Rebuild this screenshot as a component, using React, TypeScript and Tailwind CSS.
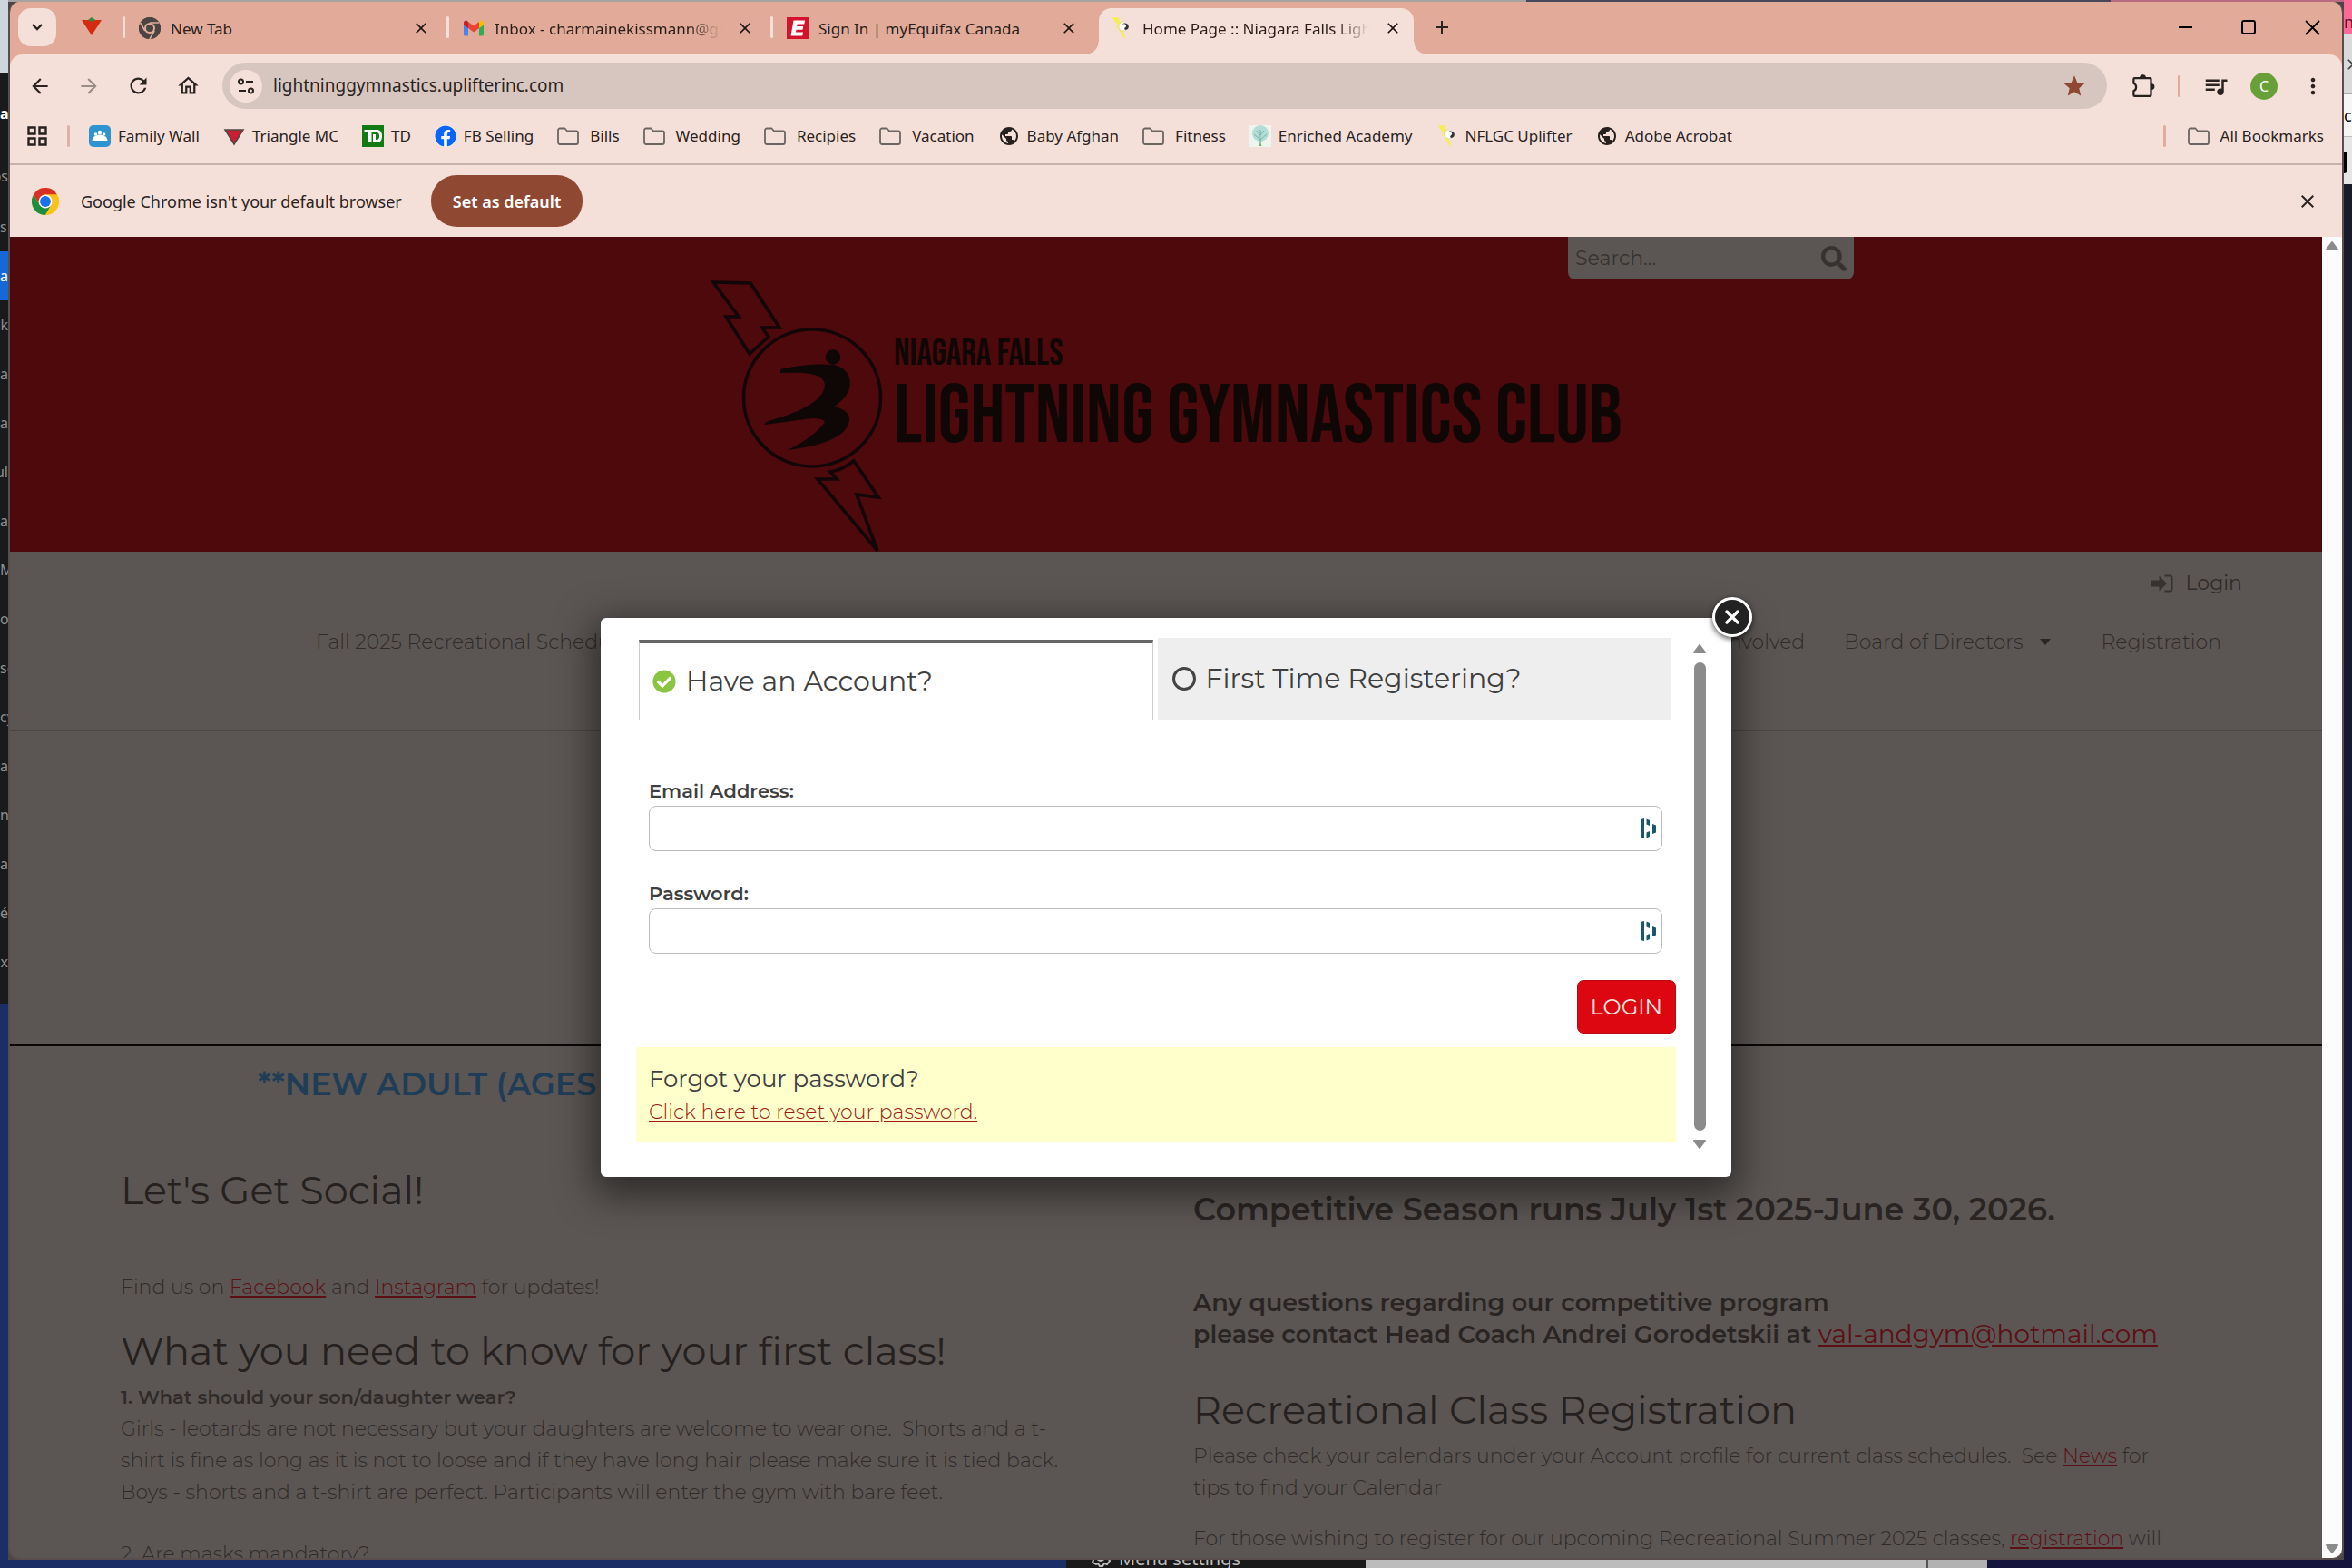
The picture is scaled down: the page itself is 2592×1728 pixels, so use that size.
import React from "react";
import { MdArrowBack, MdArrowForward, MdRefresh, MdOutlineHome, MdStar, MdQueueMusic, MdMoreVert, MdClose, MdAdd, MdPublic } from "react-icons/md";
import { FaCheckCircle, FaFacebook, FaSearch } from "react-icons/fa";

const UI = "font-['Segoe_UI','Noto_Sans','Open_Sans',sans-serif]";
const SITE = "font-['Montserrat','Inter',sans-serif]";

function ChromeIcon({ className, mono }: { className: string; mono?: boolean }) {
  const [r, g, y, b, w] = mono
    ? ["#4a4543", "#4a4543", "#4a4543", "#4a4543", "#e2ab99"]
    : ["#d93025", "#1e8e3e", "#fbc116", "#1a73e8", "#ffffff"];
  return (
    <svg viewBox="0 0 48 48" className={className} aria-hidden="true">
      <circle cx="24" cy="24" r="24" fill={y} />
      <path d="M24 12h20.8A24 24 0 0 0 3.2 12l10.4 18z" fill={r} />
      <path d="M34.4 30L24 48A24 24 0 0 1 3.2 12l10.4 18z" fill={g} />
      <path d="M24 12h20.8A24 24 0 0 1 24 48l10.4-18z" fill={y} />
      {mono && (
        <g stroke={w} strokeWidth="3">
          <path d="M24 12h20.8M34.4 30L24 48M13.6 30L3.2 12" />
        </g>
      )}
      <circle cx="24" cy="24" r="12" fill={w} />
      <circle cx="24" cy="24" r={mono ? 8 : 9.5} fill={b} />
    </svg>
  );
}

function GmailIcon() {
  return (
    <svg viewBox="0 0 24 24" className="size-6" aria-hidden="true">
      <path d="M1 6v13a1.5 1.5 0 0 0 1.500 1.500H6V10z" fill="#4285f4" />
      <path d="M23 6v13a1.500 1.500 0 0 1-1.500 1.500H18V10z" fill="#34a853" />
      <path d="M6 5v7l6 4.500 6-4.500V5l-6 4.500z" fill="#ea4335" />
      <path d="M1 6.500v2L6 12V5L4.600 4C3 3 1 4 1 6.500z" fill="#c5221f" />
      <path d="M23 6.500v2L18 12V5l1.400-1C21 3 23 4 23 6.500z" fill="#fbbc04" />
    </svg>
  );
}

function TireIcon() {
  return (
    <svg viewBox="0 0 24 24" className="size-6" aria-hidden="true">
      <path d="M1 5h22L12 22z" fill="#d42a12" />
      <path d="M8 5l4-3 4 3-4 2z" fill="#2c8a3c" />
    </svg>
  );
}

function EquifaxIcon() {
  return (
    <svg viewBox="0 0 24 24" className="size-6" aria-hidden="true">
      <rect width="24" height="24" fill="#d3122e" />
      <path d="M7.500 3.500H20l-.7 4h-7.600l-.5 2.600h7l-.7 3.600h-7l-.5 2.900h8l-.7 4H4.500z" fill="#fff" />
    </svg>
  );
}

function BoltIcon() {
  return (
    <svg viewBox="0 0 24 24" className="size-6" aria-hidden="true">
      <path d="M2 0h6l5 8h-1l3 6-1 3 3 7-7-6h2l-6-8h2z" fill="#f4ee52" />
      <circle cx="14" cy="10" r="5" fill="#fff" stroke="#cfc8c4" strokeWidth=".6" />
      <path d="M12 8c3-2 6 0 5 2s-3 2-1 4c3 0 5-3 3-6-2-2-5-2-7 0z" fill="#333" />
    </svg>
  );
}

function FolderIcon() {
  return (
    <svg viewBox="0 0 24 24" className="size-6" fill="none" stroke="#6b6562" strokeWidth="1.8" strokeLinejoin="round" aria-hidden="true">
      <path d="M1 5.500a2 2 0 0 1 2-2h5.500l2.500 3h10a2 2 0 0 1 2 2V19a2 2 0 0 1-2 2H3a2 2 0 0 1-2-2z" />
    </svg>
  );
}

function FamilyIcon() {
  return (
    <svg viewBox="0 0 24 24" className="size-6" aria-hidden="true">
      <rect width="24" height="24" rx="5" fill="#2f93cf" />
      <g fill="#fff">
        <circle cx="12" cy="8" r="2.200" />
        <circle cx="7.500" cy="10" r="1.800" />
        <circle cx="16.500" cy="10" r="1.800" />
        <path d="M3.500 17c0-3 2-5 4-5 1-2 8-2 9 0 2 0 4 2 4 5z" />
      </g>
    </svg>
  );
}

function TriangleIcon() {
  return (
    <svg viewBox="0 0 24 24" className="size-6" aria-hidden="true">
      <path d="M2 5h20L12 21z" fill="#c91f34" stroke="#4d4745" strokeWidth="1.600" />
    </svg>
  );
}

function TDIcon() {
  return (
    <svg viewBox="0 0 24 24" className="size-6" aria-hidden="true">
      <rect width="24" height="24" fill="#117a12" />
      <path d="M2.500 5H14v3h-3.500v11H7V8H2.500z" fill="#fff" />
      <path d="M13 5h3c4 0 6 2.500 6 7s-2 7-6 7h-4V10h3v6h1c2 0 3-1.500 3-4s-1-4-3-4h-3z" fill="#fff" />
    </svg>
  );
}

function TreeIcon() {
  return (
    <svg viewBox="0 0 24 24" className="size-6" aria-hidden="true">
      <rect width="24" height="24" fill="#eef4ef" />
      <circle cx="12" cy="9" r="9" fill="#b5dcd6" />
      <g stroke="#76b5a8" fill="none">
        <path d="M12 23V5M12 16L5 10M12 16l7-6M12 11L8 6M12 11l4-5" />
      </g>
      <path d="M10 23c2-1 1.500-5 2-8 .5 3 0 7 2 8z" fill="#7fae62" />
    </svg>
  );
}

function GlobeIcon() {
  return <MdPublic className="size-6 text-[#26211f]" aria-hidden="true" />;
}

function PuzzleIcon() {
  return (
    <svg viewBox="0 0 24 24" className="size-[27px]" fill="none" stroke="#26211f" strokeWidth="2" strokeLinejoin="round" aria-hidden="true">
      <path d="M3 5.500a1 1 0 0 1 1-1h15a1 1 0 0 1 1 1V21a1 1 0 0 1-1 1H4a1 1 0 0 1-1-1v-4c3-1 3.500-6 0-7.500z" />
      <path d="M9.500 4a2.500 2.500 0 0 1 5 0zM20.500 10.500a2.500 2.500 0 0 1 0 5z" fill="#26211f" strokeWidth="1" />
    </svg>
  );
}

function SiteInfoIcon() {
  return (
    <svg viewBox="0 0 24 24" className="size-6" fill="none" stroke="#26211f" strokeWidth="2" aria-hidden="true">
      <circle cx="6.500" cy="7" r="2.500" />
      <path d="M12 7h8M4 17h8" />
      <circle cx="17.500" cy="17" r="2.500" />
    </svg>
  );
}

function AppsIcon() {
  return (
    <svg viewBox="0 0 24 24" className="size-6" fill="none" stroke="#26211f" strokeWidth="2.400" aria-hidden="true">
      <path d="M2.500 2.500h7v7h-7zM14.500 2.500h7v7h-7zM2.500 14.500h7v7h-7zM14.500 14.500h7v7h-7z" />
    </svg>
  );
}

function DashlaneIcon() {
  return (
    <svg viewBox="0 0 18 24" className="h-6 w-[18px]" fill="#17586a" aria-hidden="true">
      <path d="M1 2l4-1v22l-4-1zM7.500 1.500L11 3v6L7.500 7.500zM7.500 16.500L11 15v6l-3.500 1.500zM14 7l4 1.500v8L14 18z" />
    </svg>
  );
}

function SignInIcon() {
  return (
    <svg viewBox="0 0 24 20" className="h-5 w-6" aria-hidden="true">
      <path d="M8.500 1.500L17 10l-8.500 8.500V13.500H0v-7h8.500z" fill="#37322f" />
      <path d="M14.500 1.500H20a2.500 2.500 0 0 1 2.500 2.500v12a2.500 2.500 0 0 1-2.500 2.500h-5.500" fill="none" stroke="#37322f" strokeWidth="2" />
    </svg>
  );
}

function Arrow({ down, className }: { down?: boolean; className?: string }) {
  return (
    <svg viewBox="0 0 16 12" className={`h-3 w-4 ${className ?? ""}`} fill="#8b8b8b" stroke="#8b8b8b" strokeWidth="2" strokeLinejoin="round" aria-hidden="true">
      <path d={down ? "M2 2h12L8 10z" : "M2 10h12L8 2z"} />
    </svg>
  );
}

function ClubEmblem() {
  return (
    <svg viewBox="0 0 200 314" className="h-[314px] w-[200px] shrink-0" aria-label="Lightning Gymnastics Club emblem">
      <g fill="none" stroke="#130608" strokeWidth="3.600" transform="translate(-13 1)">
        <path d="M16 16L57 17L89 66L70 66L77 76L56 95L30 54L44 54z" />
        <circle cx="125" cy="143.500" r="75.500" />
        <path d="M171 213L198 253L174 250L197 312L131 233L152 233L145 225Q158 223 171 213z" />
      </g>
      <g fill="#0e0706" transform="translate(-13 1)">
        <circle cx="148" cy="98.500" r="8.300" />
        <path d="M90 112Q122 105 147 107C165 108 174 128 160 144L150 153Q167 158 166 168C164 185 140 196 98 201Q128 186 139 170Q137 166 125 166L73 173Q70 171 80 168C115 158 137 146 139 130C139 116 118 115 90 116z" />
      </g>
    </svg>
  );
}

function Tab({ icon, title, active, faded }: { icon: React.ReactNode; title: string; active?: boolean; faded?: boolean }) {
  return (
    <div className="relative flex h-full w-[357px] items-end">
      {!active && <span className="absolute top-4 left-0 h-6 w-[3px] rounded bg-[#f5e0d9]" />}
      {active && (
        <>
          <span className="absolute bottom-0 left-[-9px] size-3.5 bg-[radial-gradient(circle_at_top_left,transparent_13px,#f5e0d9_14px)]" />
          <span className="absolute right-[-9px] bottom-0 size-3.5 bg-[radial-gradient(circle_at_top_right,transparent_13px,#f5e0d9_14px)]" />
        </>
      )}
      <div className={`mx-[5px] flex h-[51px] min-w-0 flex-1 items-center pr-[13px] pb-2 pl-[13px] ${active ? "rounded-t-[14px] bg-[#f5e0d9]" : ""}`}>
        {icon}
        <span className={`ml-[11px] flex-1 overflow-hidden pt-0.5 text-[17px] whitespace-nowrap text-[#2b1d19] ${faded ? "[mask-image:linear-gradient(to_right,#000_85%,transparent)]" : ""}`}>{title}</span>
        <button aria-label={`Close ${title}`} className="ml-4 text-[#1f1412]"><MdClose className="size-5" /></button>
      </div>
    </div>
  );
}

const bookmarks: { label: string; icon?: React.ReactNode }[] = [
  { label: "Family Wall", icon: <FamilyIcon /> },
  { label: "Triangle MC", icon: <TriangleIcon /> },
  { label: "TD", icon: <TDIcon /> },
  { label: "FB Selling", icon: <FaFacebook className="size-6 rounded-full bg-white text-[#0866ff]" /> },
  { label: "Bills" },
  { label: "Wedding" },
  { label: "Recipies" },
  { label: "Vacation" },
  { label: "Baby Afghan", icon: <GlobeIcon /> },
  { label: "Fitness" },
  { label: "Enriched Academy", icon: <TreeIcon /> },
  { label: "NFLGC Uplifter", icon: <BoltIcon /> },
  { label: "Adobe Acrobat", icon: <GlobeIcon /> },
];

function BrowserChrome() {
  return (
    <div className={`${UI} bg-[#e2ab99] text-[#2b2321]`}>
      <div className="flex h-[58px] items-stretch pl-[9px]">
        <button aria-label="Search tabs" className="mt-[7px] flex h-[42px] w-[42px] items-center justify-center rounded-[14px] bg-[#f5e0d9]">
          <svg viewBox="0 0 14 14" className="size-3.5" fill="none" stroke="#26211f" strokeWidth="2.400"><path d="M2 4l5 5 5-5" /></svg>
        </button>
        <button aria-label="Pinned tab" className="flex w-[73px] items-center justify-center pb-1 pl-1"><TireIcon /></button>
        <Tab icon={<ChromeIcon mono className="size-6" />} title="New Tab" />
        <Tab icon={<GmailIcon />} title="Inbox - charmainekissmann@gmail.com" faded />
        <Tab icon={<EquifaxIcon />} title="Sign In | myEquifax Canada" />
        <Tab icon={<BoltIcon />} title="Home Page :: Niagara Falls Lightning" active faded />
        <button aria-label="New tab" className="ml-3.5 pb-0.5"><MdAdd className="size-6" /></button>
        <div className="ml-auto flex items-center gap-[46px] pr-[21px] pb-1 text-black">
          <button aria-label="Minimize"><svg viewBox="0 0 24 24" className="size-6" stroke="currentColor" strokeWidth="2"><path d="M5 13h15" /></svg></button>
          <button aria-label="Maximize"><svg viewBox="0 0 24 24" className="size-6" fill="none" stroke="currentColor" strokeWidth="2"><rect x="5" y="6" width="14" height="14" rx="2" /></svg></button>
          <button aria-label="Close window"><svg viewBox="0 0 24 24" className="size-6" stroke="currentColor" strokeWidth="1.800"><path d="M5 6l15 15M20 6L5 21" /></svg></button>
        </div>
      </div>

      <div className="rounded-t-[14px] bg-[#f5e0d9]">
        <div className="flex h-[69px] items-center pl-5">
          <button aria-label="Back"><MdArrowBack className="size-[26px]" /></button>
          <button aria-label="Forward" className="ml-7 text-[#9b8c87]"><MdArrowForward className="size-[26px]" /></button>
          <button aria-label="Reload" className="ml-7"><MdRefresh className="size-[27px]" /></button>
          <button aria-label="Home" className="ml-7"><MdOutlineHome className="size-[27px]" /></button>
          <div className="ml-6 flex h-[51px] flex-1 items-center rounded-full bg-[#d7c6bf] pr-[22px] pl-2">
            <button aria-label="View site information" className="flex size-9 items-center justify-center rounded-full bg-[#f5e0d9]"><SiteInfoIcon /></button>
            <input aria-label="Address" defaultValue="lightninggymnastics.uplifterinc.com" className="ml-3 flex-1 bg-transparent text-[19px] outline-none" />
            <button aria-label="Bookmarked" className="text-[#8f4832]"><MdStar className="size-7" /></button>
          </div>
          <button aria-label="Extensions" className="ml-[26px]"><PuzzleIcon /></button>
          <span className="ml-[25px] h-6 w-[3px] rounded bg-[#e2ab99]" />
          <button aria-label="Media controls" className="ml-6"><MdQueueMusic className="size-[30px]" /></button>
          <button aria-label="Profile" className="ml-[23px] flex size-[30px] items-center justify-center rounded-full bg-[#689f38] text-base text-white">C</button>
          <button aria-label="Menu" className="mr-[18px] ml-[25px]"><MdMoreVert className="size-7" /></button>
        </div>
        <div className="flex h-[53px] items-start border-b-2 border-[#c7b3ac] pr-5 pl-[18px] text-[17px]">
          <button aria-label="Apps" className="h-[42px]"><AppsIcon /></button>
          <span className="mt-[9px] ml-[21px] h-6 w-[3px] rounded bg-[#d9b3a6]" />
          <ul className="ml-[21px] flex h-[42px] items-center gap-[26px]">
            {bookmarks.map((b) => (
              <li key={b.label}>
                <a href="#" className={`flex items-center whitespace-nowrap ${b.icon ? "gap-2" : "gap-3"}`}>{b.icon ?? <FolderIcon />}{b.label}</a>
              </li>
            ))}
          </ul>
          <span className="mt-[9px] ml-auto h-6 w-[3px] rounded bg-[#e2ab99]" />
          <button className="ml-6 flex h-[42px] items-center gap-3 whitespace-nowrap"><FolderIcon />All Bookmarks</button>
        </div>
        <div className="flex h-[79px] items-center pr-[26px] pl-6">
          <ChromeIcon className="size-[30px]" />
          <p className="ml-6 text-lg">Google Chrome isn't your default browser</p>
          <button className="ml-8 h-[57px] rounded-[28px] bg-[#8f4832] px-6 text-lg font-semibold text-white">Set as default</button>
          <button aria-label="Dismiss" className="ml-auto"><MdClose className="size-6" /></button>
        </div>
      </div>
    </div>
  );
}

function FieldRow({ id, label, type }: { id: string; label: string; type: string }) {
  return (
    <div className="flex flex-col">
      <label htmlFor={id} className="text-[21px] leading-8 font-semibold text-[#3f3f3f]">{label}</label>
      <div className="flex h-[50px] items-center rounded-lg border border-[#bbbbbb] pr-1.5">
        <input id={id} type={type} className="h-full min-w-0 flex-1 bg-transparent px-3 text-xl outline-none" />
        <DashlaneIcon />
      </div>
    </div>
  );
}

function LoginDialog() {
  return (
    <div role="dialog" aria-label="Login" className="relative flex h-[616px] w-[1246px] rounded-md bg-white pt-[22px] pr-6 pb-[23px] pl-[22px] shadow-[0_12px_40px_8px_rgba(0,0,0,0.5)]">
      <button aria-label="Close dialog" className="absolute -top-[23px] -right-[23px] flex size-11 items-center justify-center rounded-full border-[3px] border-white bg-[#222] text-white shadow-[0_2px_6px_rgba(0,0,0,0.7)]">
        <svg viewBox="0 0 18 18" className="size-[18px]" stroke="currentColor" strokeWidth="3.400" strokeLinecap="round"><path d="M3 3l12 12M15 3L3 15" /></svg>
      </button>
      <div className="flex min-w-0 flex-1 flex-col">
        <div role="tablist" className="flex h-[91px] text-[30px] leading-10 text-[#3f3f3f]">
          <span className="w-5 border-b border-[#ccc]" />
          <button role="tab" aria-selected="true" className="mt-0.5 flex flex-1 items-center border-x border-t-4 border-x-[#ccc] border-t-[#666] pb-0.5 pl-3.5">
            <FaCheckCircle className="mr-[11px] size-[26px] text-[#8bc441]" />Have an Account?
          </button>
          <span className="w-[5px] border-b border-[#ccc]" />
          <button role="tab" aria-selected="false" className="flex flex-1 items-center border-b border-[#ccc] bg-[#eeeeee] pl-4">
            <span className="mr-[11px] size-[26px] rounded-full border-[3px] border-[#444]" />First Time Registering?
          </button>
          <span className="w-5 border-b border-[#ccc]" />
        </div>
        <form className="flex flex-1 flex-col" onSubmit={(e) => e.preventDefault()}>
          <div className="mt-[62px] mr-[30px] ml-[31px] flex flex-col gap-[31px]">
            <FieldRow id="email" label="Email Address:" type="email" />
            <FieldRow id="password" label="Password:" type="password" />
          </div>
          <button type="submit" className="mt-[29px] mr-[15px] h-[59px] self-end rounded-[7px] border border-[#b80a12] bg-[#dc0711] px-3.5 text-2xl text-[#ffe9e4]">LOGIN</button>
          <div className="mt-[15px] mr-[15px] ml-[17px] h-[105px] bg-[#ffffcc] px-3.5 pt-4">
            <p className="text-[26px] leading-[38px] text-[#3f3f3f]">Forgot your password?</p>
            <a href="#" className="block text-[22px] leading-9 font-[350] text-[#a01c12] underline">Click here to reset your password.</a>
          </div>
        </form>
      </div>
      <div className="flex w-[22px] flex-col items-center pt-1.5 pb-[7px]">
        <Arrow />
        <div className="my-[9px] w-[13px] flex-1 rounded-full bg-[#8b8b8b]" />
        <Arrow down />
      </div>
    </div>
  );
}

function SiteLink({ children }: { children: React.ReactNode }) {
  return <a href="#" className="text-[#5c1015] underline">{children}</a>;
}

function SitePage() {
  return (
    <div className={`${SITE} h-full overflow-hidden bg-[#5b5654] text-[#302b29]`}>
      <header className="h-[347px] bg-[#4d090c]">
        <div className="mx-auto flex w-[1516px] justify-end">
          <label className="flex h-[47px] w-[315px] items-center rounded-b-lg bg-[#5b5654] px-2">
            <input aria-label="Search" placeholder="Search..." className="min-w-0 flex-1 bg-transparent text-[22px] outline-none placeholder:text-[#37322f]" />
            <FaSearch className="size-7 text-[#37322f]" />
          </label>
        </div>
        <div className="mx-auto -mt-3.5 flex w-[1004px] text-[#0e0706] font-['Bebas_Neue','Oswald','Roboto_Condensed',sans-serif]">
          <ClubEmblem />
          <div className="pt-[76px] pl-0.5 whitespace-nowrap">
            <p className="text-[41px] leading-10">NIAGARA FALLS</p>
            <h1 className="mt-2.5 text-[91px] leading-[80px] font-normal">LIGHTNING GYMNASTICS CLUB</h1>
          </div>
        </div>
      </header>

      <nav className="flex h-[198px] flex-col border-b-2 border-[#4b4745] pt-5 text-[22px] leading-[30px]">
        <a href="#" className="mr-[88px] flex items-center gap-3.5 self-end"><SignInIcon />Login</a>
        <div className="mt-[35px] mr-[111px] ml-[337px] flex items-center font-[350]">
          <a href="#">Fall 2025 Recreational Schedule</a>
          <a href="#" className="ml-auto">Get Involved</a>
          <a href="#" className="ml-[43px] flex items-center gap-[19px]">Board of Directors
            <svg viewBox="0 0 12 8" className="h-2 w-3" fill="#2a2523"><path d="M0 0h12L6 7z" /></svg>
          </a>
          <a href="#" className="ml-[55px]">Registration</a>
        </div>
      </nav>
      <div className="h-[347px] border-b-[3px] border-[#080606]" />
      <h2 className="pl-[273px] text-[35px] leading-[84px] font-semibold whitespace-nowrap text-[#1f3d57]">**NEW ADULT (AGES</h2>

      <main className="grid grid-cols-2 gap-[60px] px-[122px] text-[22px] leading-[35px] font-[350] whitespace-nowrap">
        <section>
          <h2 className="mt-[49px] text-[43px] leading-[52px] font-normal text-[#26211f]">Let's Get Social!</h2>
          <p className="mt-[63px]">Find us on <SiteLink>Facebook</SiteLink> and <SiteLink>Instagram</SiteLink> for updates!</p>
          <h2 className="mt-[27px] text-[43px] leading-[52px] font-normal text-[#26211f]">What you need to know for your first class!</h2>
          <p className="mt-[7px] text-[21px] font-semibold">1. What should your son/daughter wear?</p>
          <p>Girls - leotards are not necessary but your daughters are welcome to wear one.&nbsp; Shorts and a t-<br />shirt is fine as long as it is not to loose and if they have long hair please make sure it is tied back.<br />Boys - shorts and a t-shirt are perfect. Participants will enter the gym with bare feet.</p>
          <p className="mt-[33px]">2. Are masks mandatory?</p>
        </section>
        <section>
          <h2 className="mt-[74px] text-[35px] leading-[44px] font-semibold text-[#2a2523]">Competitive Season runs July 1st 2025-June 30, 2026.</h2>
          <p className="mt-16 text-[27px] leading-[34px] font-semibold text-[#2a2523]">Any questions regarding our competitive program<br />please contact Head Coach Andrei Gorodetskii at <span className="text-[28px] font-normal"><SiteLink>val-andgym@hotmail.com</SiteLink></span></p>
          <h2 className="mt-10 text-[43px] leading-[52px] font-normal text-[#26211f]">Recreational Class Registration</h2>
          <p className="mt-[7px]">Please check your calendars under your Account profile for current class schedules.&nbsp; See <SiteLink>News</SiteLink> for<br />tips to find your Calendar</p>
          <p className="mt-[21px]">For those wishing to register for our upcoming Recreational Summer 2025 classes, <SiteLink>registration</SiteLink> will</p>
        </section>
      </main>
    </div>
  );
}

const sideItems: { text: string; end?: boolean }[] = [
  { text: "ar" },
  { text: "ck", end: true },
  { text: "ar" },
  { text: "ar" },
  { text: "ul", end: true },
  { text: "a" },
  { text: "M" },
  { text: "ov" },
  { text: "se" },
  { text: "cy" },
  { text: "ar" },
  { text: "n" },
  { text: "ac" },
  { text: "sé", end: true },
  { text: "ax", end: true },
];

function LeftSliver() {
  return (
    <div className={`${UI} flex w-[9px] shrink-0 flex-col overflow-hidden bg-[#1b2f66] text-base text-[#8d8f90]`}>
      <div className="h-[81px] bg-[#ccd6dc]" />
      <div className="h-[1025px] bg-[#191a1b] pt-[26px]">
        <p className="flex h-9 items-center font-bold text-white">at</p>
        <p className="mt-6 flex h-[54px] items-center justify-end">os</p>
        <p className="mt-0.5 flex h-[54px] items-center">s</p>
        {sideItems.map((t, i) => (
          <p key={i} className={`flex h-[54px] items-center ${t.end ? "justify-end" : ""} ${i === 0 ? "bg-[#1668d8] text-white" : ""}`}>{t.text}</p>
        ))}
      </div>
    </div>
  );
}

function RightSliver() {
  return (
    <div className={`${UI} flex w-[9px] shrink-0 flex-col overflow-hidden bg-linear-to-b from-[#1a1b26] to-[#14143c] text-lg whitespace-nowrap`}>
      <div className="flex h-[38px] items-end bg-[#fb6a97] text-[#5a1030]">nk</div>
      <div className="flex h-[66px] items-center border-b border-[#aaa] bg-[#dadada] text-[#444]"><MdClose className="size-5 shrink-0" /></div>
      <div className="flex h-[47px] items-center border-b border-[#bbb] bg-[#f6f6f6] text-black">co</div>
      <div className="h-[52px] bg-[#e6e6e6] pt-4"><div className="h-6 w-1 rounded-r bg-black" /></div>
    </div>
  );
}

function BottomSliver() {
  return (
    <div className={`${UI} flex h-[9px] shrink-0 overflow-hidden bg-[#1b2f66]`}>
      <div className="w-[1175px]" />
      <div className="flex w-[330px] items-end gap-2 bg-[#1a1a1a] pl-[26px] text-xl leading-5 text-[#bdbdbd]">
        <svg viewBox="0 0 24 24" className="size-6 shrink-0" fill="none" stroke="#bdbdbd" strokeWidth="2"><circle cx="12" cy="12" r="4" /><path d="M9 3l1 3-3 2-3-1-2 4 2 2v2l-1 3 4 2 2-1 2 3h3l2-3 3 1 3-4-2-3" /></svg>
        Menu settings
      </div>
      <div className="w-[620px] border-r-2 border-[#555] bg-[#bcbcbc]" />
      <div className="w-[65px] bg-[#b2b2b2]" />
      <div className="flex-1 bg-[#14143c]" />
    </div>
  );
}

export default function App() {
  return (
    <div className="flex h-screen w-full flex-col overflow-hidden bg-[#4a4648]">
      <div className="flex min-h-0 flex-1">
        <LeftSliver />
        <div className="flex min-w-0 flex-1 flex-col">
          <div className="flex h-0.5 shrink-0">
            <div className="flex-[65] bg-[#a8a3a0]" />
            <div className="flex-[25] bg-[#46475a]" />
            <div className="flex-[10] bg-[#b86a80]" />
          </div>
          <div className="flex min-h-0 flex-1 flex-col overflow-hidden rounded-t-[12px] rounded-b-[12px] border-x-2 border-b-2 border-[#5a4d4e]">
            <BrowserChrome />
            <div className="flex min-h-0 flex-1">
              <div className="relative min-w-0 flex-1">
                <SitePage />
                <div className="absolute inset-0 flex items-center justify-center overflow-hidden">
                  <div className={SITE}><LoginDialog /></div>
                </div>
              </div>
              <div className="flex w-[22px] flex-col items-center justify-between bg-[#fcfcfc] pt-1 pb-1">
                <Arrow />
                <Arrow down />
              </div>
            </div>
          </div>
        </div>
        <RightSliver />
      </div>
      <BottomSliver />
    </div>
  );
}
